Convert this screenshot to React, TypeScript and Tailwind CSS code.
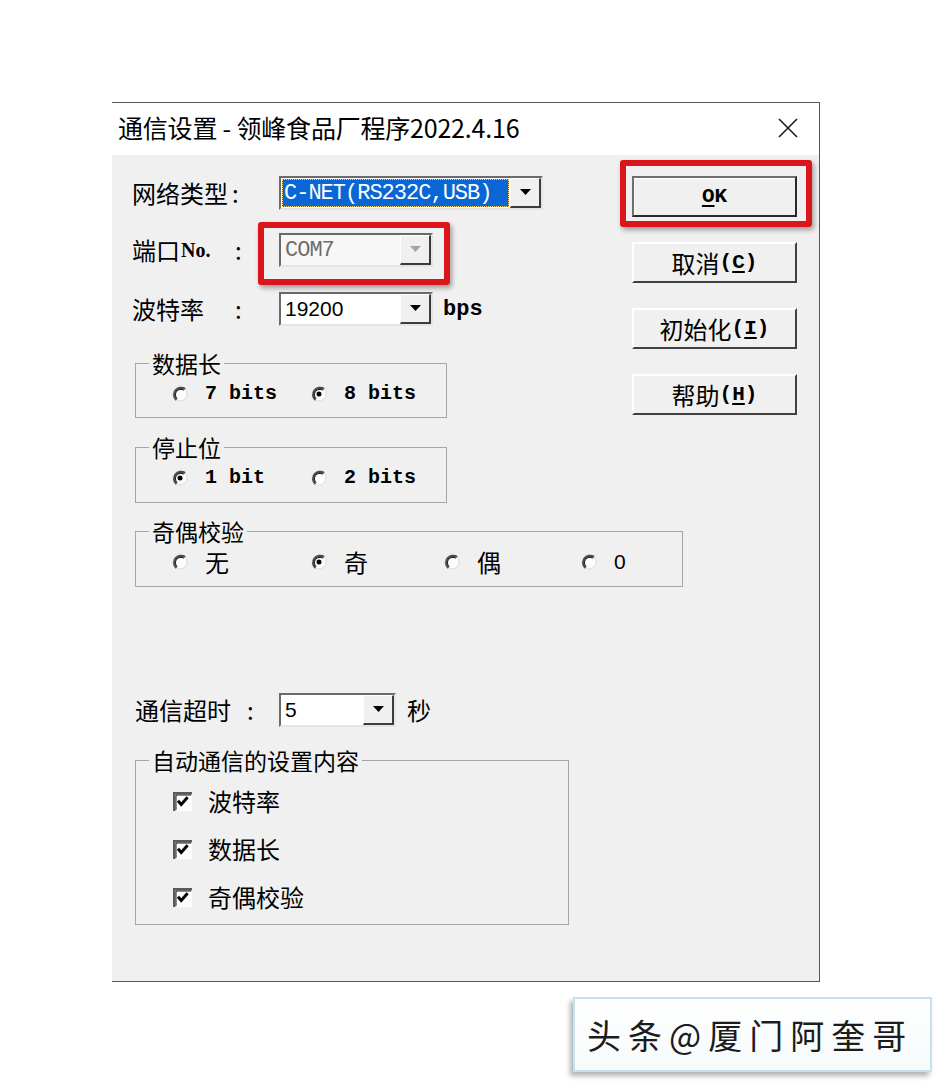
import React from "react";

const SANS = "font-['Noto_Sans_CJK_SC','Liberation_Sans',sans-serif]";
const MONO = "font-['Liberation_Mono','Noto_Sans_CJK_SC',monospace]";
const ARIAL = "font-['Liberation_Sans','Noto_Sans_CJK_SC',sans-serif]";

const DropArrow = ({ disabled = false }: { disabled?: boolean }) => (
  <svg width="11" height="7" viewBox="0 0 11 7">
    {disabled && <path d="M1 1h10L6 6z" fill="#fff" />}
    <path d="M0 0h11L5.5 6z" fill={disabled ? "#a3a3a3" : "#000"} />
  </svg>
);

type ComboProps = {
  width: string;
  children: React.ReactNode;
  disabled?: boolean;
  selected?: boolean;
};

const Combo = ({ width, children, disabled, selected }: ComboProps) => {
  return (
    <div
      className={`flex h-[34px] border-2 border-t-[#6a6a6a] border-l-[#6a6a6a] border-r-[#e4e4e4] border-b-[#e4e4e4] ${
        disabled ? "bg-[#f7f7f7]" : "bg-white"
      } ${width}`}
    >
      <div className="flex flex-1 items-center p-[1px]">
        {selected ? (
          <div className="flex h-full w-full items-center border border-dotted border-[#f3d27a] bg-[#0a66d4] px-[1px] text-white">
            {children}
          </div>
        ) : (
          <div className="flex h-full w-full items-center px-[3px]">{children}</div>
        )}
      </div>
      <div className="flex w-[31px] items-center justify-center border-t border-l border-t-white border-l-white border-r-2 border-b-2 border-r-[#3c3c3c] border-b-[#3c3c3c] bg-[#f0f0f0]">
        <DropArrow disabled={disabled} />
      </div>
    </div>
  );
};

const Radio = ({ checked = false }: { checked?: boolean }) => (
  <svg width="16" height="16" viewBox="0 0 16 16" className="shrink-0">
    <circle cx="8" cy="8" r="7" fill="#fdfdfd" stroke="#dcdcdc" strokeWidth="1" />
    <path d="M13 3A7 7 0 0 0 4.4 14" fill="none" stroke="#4a4a4a" strokeWidth="2.2" />
    <path d="M11.8 4.2A5.4 5.4 0 0 0 5.2 12.7" fill="none" stroke="#111" strokeWidth="1" />
    {checked && <circle cx="8" cy="8" r="2.5" fill="#000" />}
  </svg>
);

const CheckBox = () => (
  <svg width="19" height="19" viewBox="0 0 19 19" className="shrink-0">
    <rect width="19" height="19" fill="#fdfdfd" />
    <path d="M1.2 19V1.2H19" stroke="#5a5a5a" strokeWidth="2.4" fill="none" />
    <path d="M3 18V3h15" stroke="#1e1e1e" strokeWidth="1" fill="none" />
    <path d="M5 8.8l3.2 3.6 6.4-7.2" stroke="#000" strokeWidth="3" fill="none" />
  </svg>
);

type RadioItemProps = {
  label: React.ReactNode;
  checked?: boolean;
  width: string;
};

const RadioItem = ({ label, checked, width }: RadioItemProps) => (
  <div className={`flex items-center gap-[17px] ${width}`}>
    <Radio checked={checked} />
    {label}
  </div>
);

type GroupProps = {
  title: string;
  className: string;
  children: React.ReactNode;
};

const Group = ({ title, className, children }: GroupProps) => (
  <fieldset className={`ml-[3px] min-w-0 border border-[#a5a5a5] ${className}`}>
    <legend className={`ml-[13px] px-[3px] text-[23px] leading-[24px] text-black ${SANS}`}>
      {title}
    </legend>
    {children}
  </fieldset>
);

type BtnProps = {
  children: React.ReactNode;
  isDefault?: boolean;
  className?: string;
};

const Btn = ({ children, isDefault, className = "" }: BtnProps) => (
  <button
    className={`flex h-[41px] w-[165px] items-center justify-center bg-[#f0f0f0] text-black ${
      isDefault
        ? "border-2 border-t-[#6e6e6e] border-l-[#6e6e6e] border-r-[#2a2a2a] border-b-[#2a2a2a] shadow-[inset_1px_1px_0_#fff]"
        : "border-2 border-t-white border-l-white border-r-[#404040] border-b-[#404040]"
    } ${className}`}
  >
    {children}
  </button>
);

const Hot = ({ k }: { k: string }) => (
  <span className={`text-[21px] font-bold ${MONO}`}>
    (<span className="underline underline-offset-[3px]">{k}</span>)
  </span>
);

const RedMark = ({ className }: { className: string }) => (
  <div
    className={`pointer-events-none absolute rounded-[3px] border-[6px] border-[#dc151c] shadow-[2px_3px_5px_rgba(0,0,0,0.35)] ${className}`}
  />
);

export default function App() {
  return (
    <div className="min-h-screen bg-white pl-[112px] pt-[102px]">
      <div className="flex h-[880px] w-[708px] flex-col border-t border-r border-b border-[#565656]">
        {/* title bar */}
        <div className="flex h-[52px] items-center justify-between bg-white pb-[3px] pl-[6px] pr-[21px]">
          <div className={`text-[25px] leading-none tracking-[-0.2px] text-black ${SANS}`}>
            通信设置 - 领峰食品厂程序2022.4.16
          </div>
          <svg width="20" height="20" viewBox="0 0 20 20">
            <path d="M1 1l18 18M19 1L1 19" stroke="#1e1e1e" strokeWidth="1.6" />
          </svg>
        </div>

        {/* body */}
        <div className={`flex flex-1 bg-[#f0f0f0] ${SANS}`}>
          <div className="flex min-w-0 flex-1 flex-col pl-[20px] pt-[21px]">
            <div className="flex h-[34px] items-center">
              <div className="flex w-[147px] text-[24px] text-black">
                <span className="w-[100px]">网络类型</span>
                <span>:</span>
              </div>
              <Combo width="w-[264px]" selected>
                <span className={`text-[22px] tracking-[-1px] ${MONO}`}>C-NET(RS232C,USB)</span>
              </Combo>
            </div>

            <div className="mt-[23px] flex h-[34px] items-center">
              <div className="flex w-[147px] items-center text-[24px] text-black">
                <span className="flex w-[103px] items-center">
                  端口
                  <span className="ml-[1px] font-['Liberation_Serif',serif] text-[20px] font-bold">No.</span>
                </span>
                <span>:</span>
              </div>
              <div className="relative">
                <Combo width="w-[154px]" disabled>
                  <span className={`text-[22px] tracking-[-1px] text-[#6d6d6d] ${MONO}`}>COM7</span>
                </Combo>
                <RedMark className="-left-[21px] -right-[17px] -top-[11px] -bottom-[18px]" />
              </div>
            </div>

            <div className="mt-[25px] flex h-[34px] items-center">
              <div className="flex w-[147px] text-[24px] text-black">
                <span className="w-[103px]">波特率</span>
                <span>:</span>
              </div>
              <Combo width="w-[154px]">
                <span className={`text-[21px] text-black ${ARIAL}`}>19200</span>
              </Combo>
              <span className={`ml-[10px] text-[22px] font-bold text-black ${MONO}`}>bps</span>
            </div>

            <Group title="数据长" className="mt-[25px] w-[312px]">
              <div className={`mb-[13px] mt-[9px] flex h-[20px] items-center pl-[36px] text-[20px] font-bold leading-[20px] text-black ${MONO}`}>
                <RadioItem width="w-[139px]" label="7 bits" />
                <RadioItem width="" label="8 bits" checked />
              </div>
            </Group>

            <Group title="停止位" className="mt-[17px] w-[312px]">
              <div className={`mb-[14px] mt-[9px] flex h-[20px] items-center pl-[36px] text-[20px] font-bold leading-[20px] text-black ${MONO}`}>
                <RadioItem width="w-[139px]" label="1 bit" checked />
                <RadioItem width="" label="2 bits" />
              </div>
            </Group>

            <Group title="奇偶校验" className="mt-[16px] w-[548px]">
              <div className="mb-[14px] mt-[9px] flex h-[20px] items-center pl-[36px] text-[24px] leading-[20px] text-black">
                <RadioItem width="w-[139px]" label="无" />
                <RadioItem width="w-[133px]" label="奇" checked />
                <RadioItem width="w-[137px]" label="偶" />
                <RadioItem width="" label={<span className={`text-[21px] ${ARIAL}`}>0</span>} />
              </div>
            </Group>

            <div className="mt-[106px] flex h-[34px] items-center">
              <div className="flex w-[147px] pl-[3px] text-[24px] text-black">
                <span className="w-[112px]">通信超时</span>
                <span>:</span>
              </div>
              <Combo width="w-[117px]">
                <span className={`text-[21px] text-black ${ARIAL}`}>5</span>
              </Combo>
              <span className="ml-[11px] text-[24px] text-black">秒</span>
            </div>

            <Group title="自动通信的设置内容" className="mt-[21px] w-[434px]">
              <div className="mb-[15px] mt-[17px] flex flex-col gap-[24px] pl-[37px] text-[24px] leading-[24px] text-black">
                {["波特率", "数据长", "奇偶校验"].map((t) => (
                  <div key={t} className="flex h-[24px] items-center gap-[16px]">
                    <CheckBox />
                    <span>{t}</span>
                  </div>
                ))}
              </div>
            </Group>
          </div>

          <div className="flex shrink-0 flex-col pr-[22px] pt-[21px] text-[24px]">
            <div className="relative">
              <Btn isDefault>
                <span className={`text-[21px] font-bold ${MONO}`}>
                  <span className="underline underline-offset-[3px]">O</span>K
                </span>
              </Btn>
              <RedMark className="-left-[12px] -right-[15px] -top-[16px] -bottom-[10px]" />
            </div>
            <Btn className="mt-[25px]">
              取消
              <Hot k="C" />
            </Btn>
            <Btn className="mt-[25px]">
              初始化
              <Hot k="I" />
            </Btn>
            <Btn className="mt-[25px]">
              帮助
              <Hot k="H" />
            </Btn>
          </div>
        </div>
      </div>

      {/* watermark */}
      <div className="ml-[461px] mt-[15px] flex h-[75px] w-[359px] items-center border-2 border-[#c3e4ee] bg-gradient-to-b from-white to-[#f6fafb] pl-[12px] shadow-[-3px_4px_5px_rgba(0,0,0,0.3)]">
        <span className={`text-[34px] leading-none tracking-[7px] text-[#1c1c1c] ${SANS}`}>
          头条@厦门阿奎哥
        </span>
      </div>
    </div>
  );
}
